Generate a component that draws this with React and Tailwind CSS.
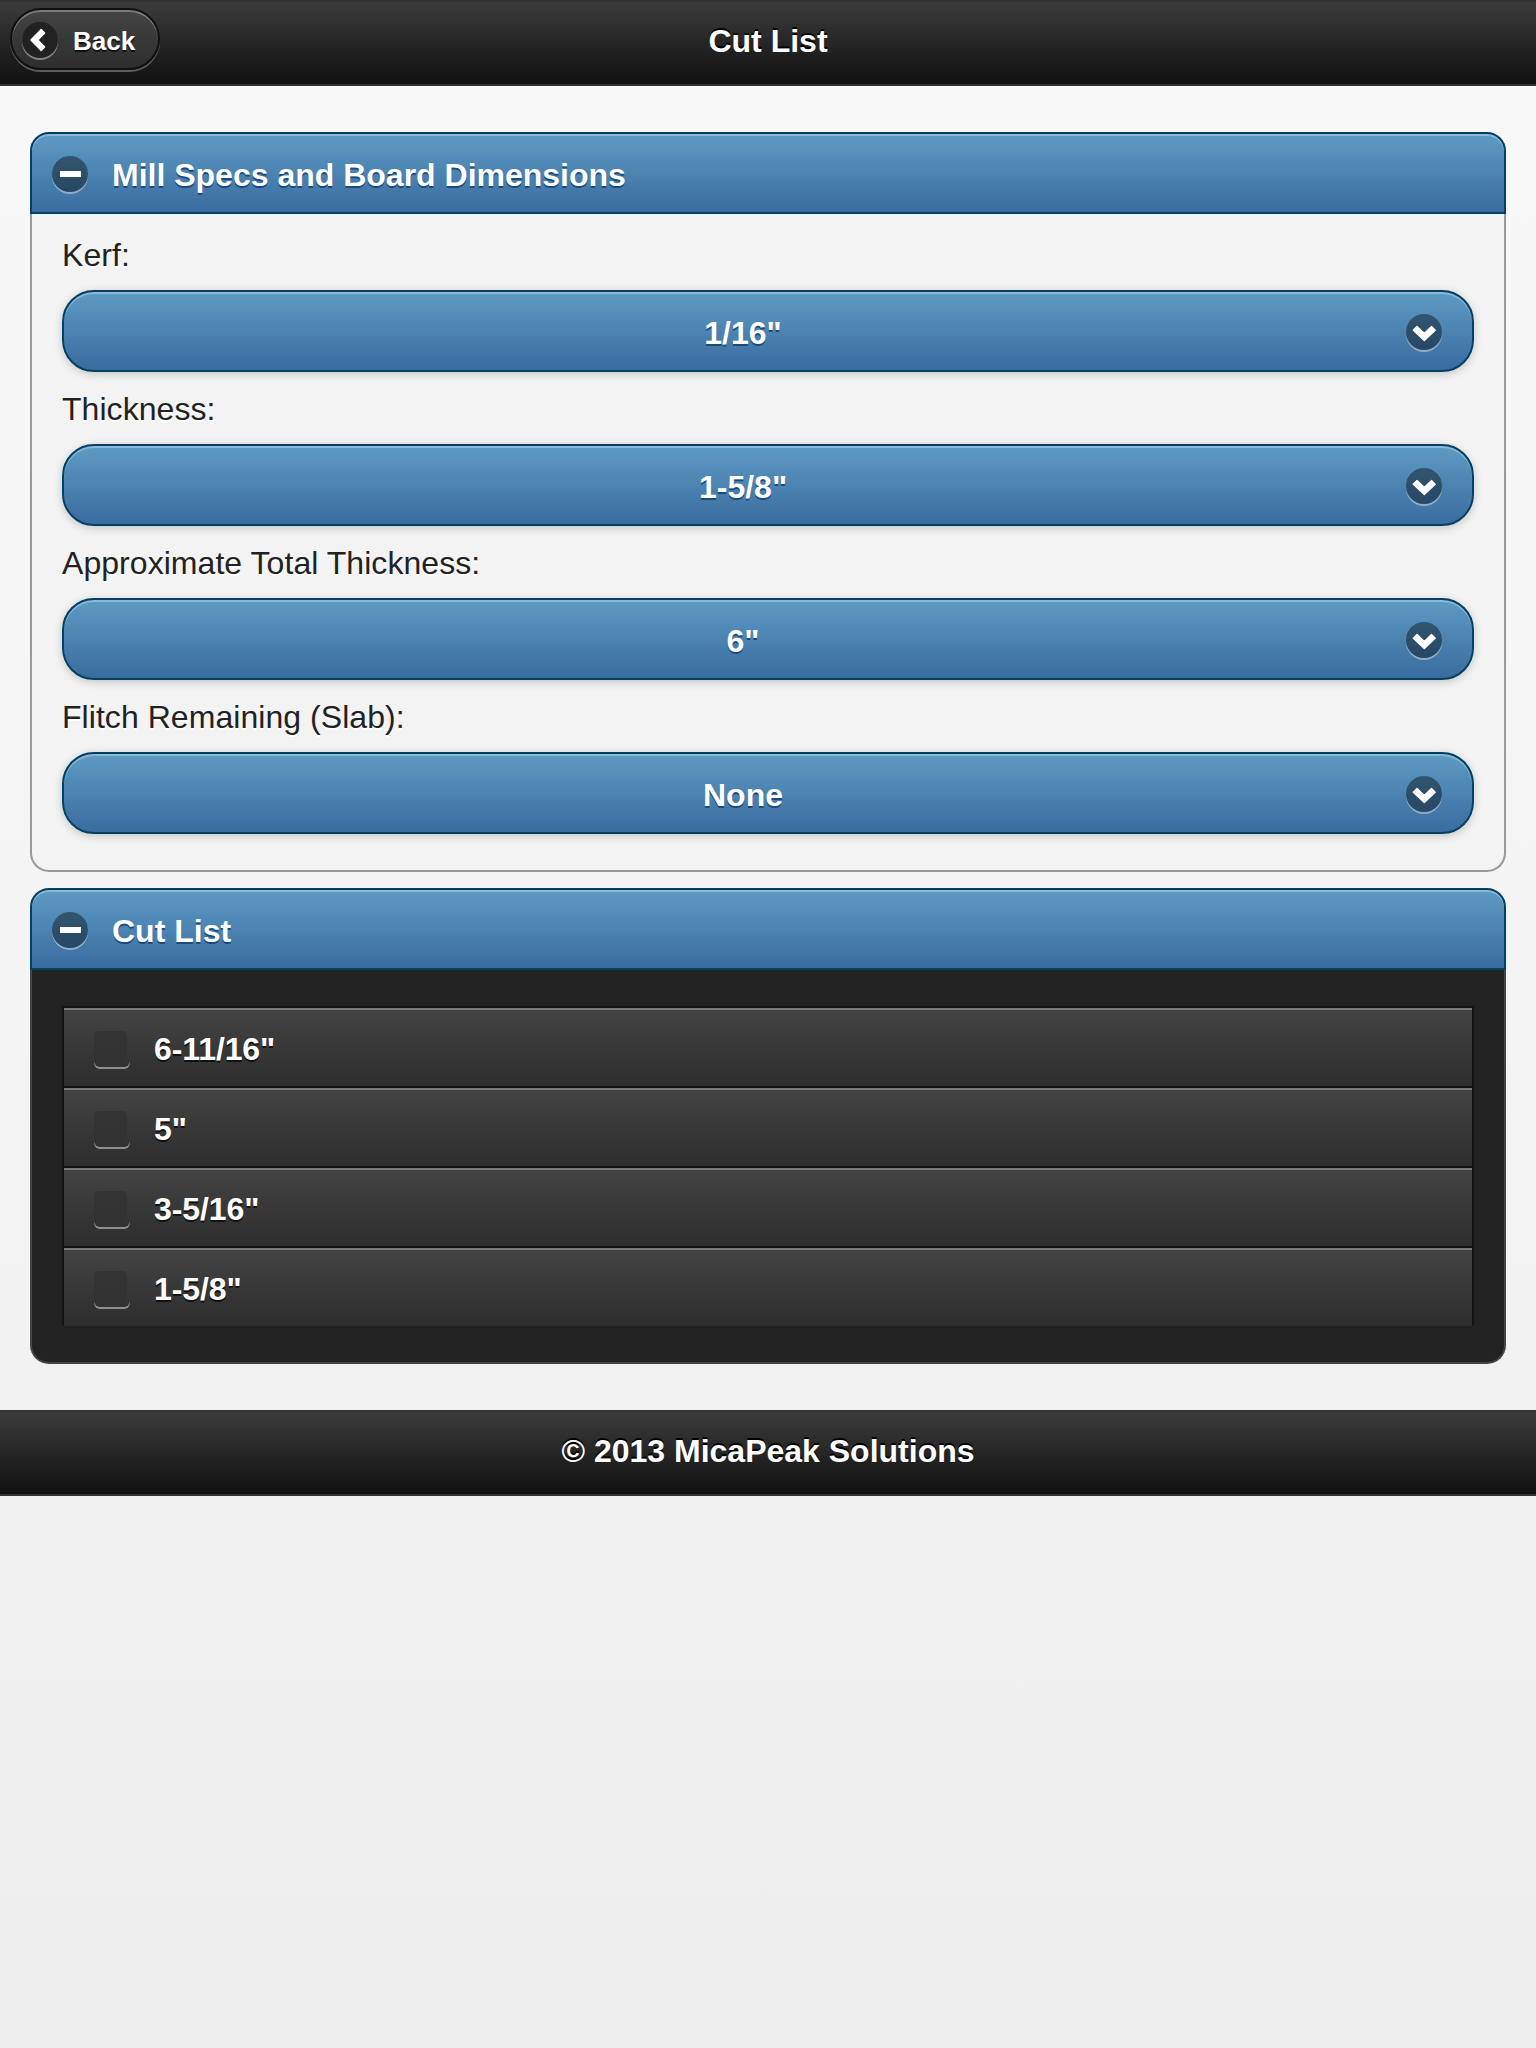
const FONT = 'font-["Liberation_Sans",Arial,Helvetica,sans-serif]';
const HEAD_TEXT = "text-white font-bold [text-shadow:0_2px_0_#194b7e]";
const BLUE =
  "border-2 border-[#044062] bg-linear-to-b from-[#5f9cc5] to-[#396b9e] bg-origin-border";

function Disc({ dark, children }) {
  return (
    <span
      className={`${dark ? "bg-[#222]" : "bg-black/40"} mt-0.5 block size-9 shrink-0 rounded-full shadow-[0_2px_0_rgba(255,255,255,0.4)]`}
    >
      <svg
        viewBox="0 0 36 36"
        className="block size-9"
        fill="#fff"
        stroke="#fff"
        strokeWidth="1.4"
        strokeLinejoin="round"
      >
        {children}
      </svg>
    </span>
  );
}

function Bar({ children }) {
  return (
    <div className="relative flex h-[86px] items-center justify-center border-y-2 border-[#333] bg-linear-to-b from-[#3c3c3c] to-[#111] text-[32px] leading-[40px] font-bold text-white">
      {children}
    </div>
  );
}

function Heading({ children }) {
  return (
    <h3
      className={`flex h-[82px] items-center gap-6 rounded-t-[19px] pl-5 text-[32px] leading-[40px] shadow-[inset_0_2px_0_rgba(255,255,255,0.3)] ${BLUE} ${HEAD_TEXT}`}
    >
      <Disc>
        <rect x="8" y="15" width="21" height="6" stroke="none" />
      </Disc>
      <span className="pt-1">{children}</span>
    </h3>
  );
}

function Select({ label, value }) {
  return (
    <div className="mb-[11px]">
      <label className="block h-[61px] pt-1.5 text-[32px] leading-[40px] tracking-[0.05px] text-[#222] [text-shadow:0_2px_0_#fff]">
        {label}
      </label>
      <div
        className={`flex h-[82px] items-center rounded-[32px] pr-[30px] pl-[16px] text-[32px] leading-[40px] shadow-[inset_0_2px_0_rgba(255,255,255,0.3),0_2px_8px_rgba(0,0,0,0.2)] ${BLUE} ${HEAD_TEXT}`}
      >
        <span className="flex-1 pt-1 text-center">{value}</span>
        <Disc>
          <path d="M7.3 16.2 L11 12.6 L18.3 19.4 L25.5 12.6 L29.2 16.2 L18.3 26.4 Z" />
        </Disc>
      </div>
    </div>
  );
}

const SELECTS = [
  ["Kerf:", '1/16"'],
  ["Thickness:", '1-5/8"'],
  ["Approximate Total Thickness:", '6"'],
  ["Flitch Remaining (Slab):", "None"],
];
const CUTS = ['6-11/16"', '5"', '3-5/16"', '1-5/8"'];

export default function App() {
  return (
    <div className={`h-[2048px] w-[1536px] overflow-hidden bg-linear-to-b from-[#f9f9f9] to-[#eee] ${FONT}`}>
      <Bar>
        <button className="absolute top-[6px] left-[10px] flex h-[62px] w-[150px] items-center gap-[15px] rounded-[31px] border-2 border-[#111] bg-linear-to-b from-[#444] to-[#2d2d2d] pl-[10px] text-[26px] leading-[30px] font-bold text-white shadow-[inset_0_2px_0_rgba(255,255,255,0.3),0_2px_0_rgba(255,255,255,0.3)] [text-shadow:0_2px_0_#111]">
          <Disc dark>
            <path d="M8.9 18 L19.2 7.5 L22.6 11 L15.8 18 L22.6 25 L19.2 28.5 Z" />
          </Disc>
          <span className="pt-1">Back</span>
        </button>
        <h1 className="pb-1 [text-shadow:0_-2px_0_#000]">Cut List</h1>
      </Bar>

      <main className="flex flex-col gap-4 px-[30px] pt-[46px] pb-[46px]">
        <section>
          <Heading>Mill Specs and Board Dimensions</Heading>
          <div className="h-[658px] rounded-b-[19px] border-2 border-t-0 border-[#999] bg-[#f3f3f3] px-[30px] pt-[15px]">
            {SELECTS.map(([label, value]) => (
              <Select key={label} label={label} value={value} />
            ))}
          </div>
        </section>

        <section>
          <Heading>Cut List</Heading>
          <div className="h-[394px] rounded-b-[19px] border-2 border-t-0 border-[#444] bg-[#222] px-[30px] pt-9">
            {CUTS.map((cut) => (
              <div
                key={cut}
                className="flex h-20 items-center gap-6 border-2 border-b-0 border-[#111] bg-linear-to-b from-[#444] to-[#2d2d2d] pt-1 pl-[30px] text-[32px] leading-[40px] font-bold tracking-[-0.1px] text-white shadow-[inset_0_2px_0_rgba(255,255,255,0.3)] [text-shadow:0_2px_0_#111]"
              >
                <span className="size-9 rounded-[6px] shadow-[0_2px_0_rgba(255,255,255,0.45)]">
                  <span className="block h-[34px] w-[33px] rounded-[5px] bg-linear-to-b from-[#343434] to-[#323232]" />
                </span>
                <span>{cut}</span>
              </div>
            ))}
          </div>
        </section>
      </main>

      <Bar>
        <h4 className="pb-1 [text-shadow:0_-2px_0_#000]">© 2013 MicaPeak Solutions</h4>
      </Bar>
    </div>
  );
}
